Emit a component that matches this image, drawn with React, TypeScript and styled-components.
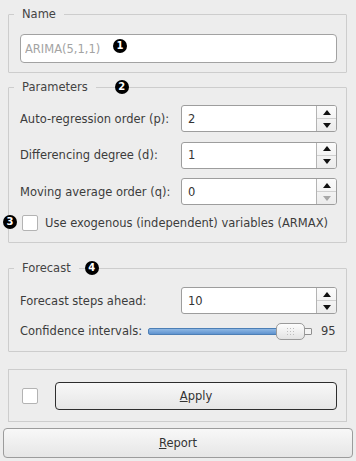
import React from "react";
import styled, { createGlobalStyle } from "styled-components";

const GlobalStyle = createGlobalStyle`
  html, body {
    margin: 0;
    padding: 0;
    background: #ededed;
  }
  body {
    font-family: "DejaVu Sans", "Liberation Sans", sans-serif;
    font-size: 11.5px;
    color: #3c3c3c;
  }
`;

const Page = styled.div`
  width: 356px;
  height: 461px;
  box-sizing: border-box;
  padding: 7px 9px 0 8px;
  display: flex;
  flex-direction: column;
`;

const Group = styled.fieldset<{ $gap?: number }>`
  margin: ${(p) => p.$gap ?? 0}px 0 0 0;
  padding: 0;
  border: 1px solid #cdcdcd;
  border-radius: 1px;
  min-width: 0;
`;

const Legend = styled.legend`
  position: relative;
  margin-left: 5px;
  padding: 0 8px;
  line-height: 14px;
  color: #444;
`;

const Badge = styled.span`
  display: inline-flex;
  align-items: center;
  justify-content: center;
  width: 14px;
  height: 14px;
  border-radius: 50%;
  background: #000;
  color: #fff;
  font-size: 10px;
  font-weight: bold;
  line-height: 1;
  position: absolute;
`;

const LegendBadge = styled(Badge)<{ $offset: number }>`
  top: 50%;
  left: calc(100% + ${(p) => p.$offset}px);
  transform: translateY(-50%);
`;

const Body = styled.div<{ $pad: string }>`
  padding: ${(p) => p.$pad};
`;

const InputWrap = styled.div`
  position: relative;
`;

const TextInput = styled.input`
  box-sizing: border-box;
  display: block;
  width: 100%;
  height: 29px;
  border: 1px solid #a2a2a2;
  border-radius: 4px;
  background: #fff;
  padding: 0 4px;
  font: inherit;
  color: #333;
  outline: none;
  &::placeholder {
    color: #a3a3a3;
  }
`;

const InputBadge = styled(Badge)`
  left: 93px;
  top: 5px;
`;

const FormGrid = styled.div`
  display: grid;
  grid-template-columns: 1fr 156px;
  grid-auto-rows: 27px;
  row-gap: 9.5px;
  align-items: center;
`;

const Label = styled.span`
  color: #3c3c3c;
  white-space: nowrap;
`;

const Spin = styled.div`
  box-sizing: border-box;
  height: 27px;
  display: flex;
  border: 1px solid #9d9d9d;
  border-radius: 3px;
  background: #fff;
  overflow: hidden;
`;

const SpinValue = styled.div`
  flex: 1;
  display: flex;
  align-items: center;
  padding-left: 6px;
  color: #333;
`;

const SpinButtons = styled.div`
  width: 19px;
  display: flex;
  flex-direction: column;
  border-left: 1px solid #b4b4b4;
  background: linear-gradient(#fbfbfb, #ececec);
`;

const SpinArrow = styled.div<{ $down?: boolean; $disabled?: boolean }>`
  flex: 1;
  display: flex;
  align-items: center;
  justify-content: center;
  & + & {
    border-top: 1px solid #d0d0d0;
  }
  &::after {
    content: "";
    width: 0;
    height: 0;
    border-left: 4.5px solid transparent;
    border-right: 4.5px solid transparent;
    ${(p) =>
      p.$down
        ? `border-top: 5px solid ${p.$disabled ? "#a8a8a8" : "#111"};`
        : `border-bottom: 5px solid ${p.$disabled ? "#a8a8a8" : "#111"};`}
  }
`;

const CheckRow = styled.div`
  position: relative;
  display: flex;
  align-items: center;
  gap: 7px;
  height: 17px;
  margin-top: 9px;
`;

const Check = styled.span<{ $inset?: number }>`
  box-sizing: border-box;
  width: 16px;
  height: 16px;
  margin-left: ${(p) => p.$inset ?? 0}px;
  border: 1px solid #b3b3b3;
  border-radius: 2px;
  background: #fff;
  flex-shrink: 0;
`;

const CheckBadge = styled(Badge)`
  left: -17px;
  top: 1px;
`;

const SliderRow = styled.div`
  display: flex;
  align-items: center;
  height: 20px;
  margin-top: 7px;
`;

const Slider = styled.div`
  flex: 1;
  display: flex;
  align-items: center;
  margin: 0 9px 0 6px;
`;

const Groove = styled.div<{ $filled?: boolean }>`
  box-sizing: border-box;
  height: 7px;
  border: 1px solid ${(p) => (p.$filled ? "#4d7fb5" : "#8f8f8f")};
  background: ${(p) =>
    p.$filled ? "linear-gradient(#8fb8e4, #5f93cf)" : "#f4f4f4"};
`;

const Fill = styled(Groove)`
  flex: 1;
  margin-right: -3px;
  border-radius: 2px 0 0 2px;
`;

const Tail = styled(Groove)`
  width: 9px;
  margin-left: -2px;
  border-radius: 0 1px 1px 0;
`;

const Handle = styled.div`
  box-sizing: border-box;
  position: relative;
  width: 29px;
  height: 17px;
  border: 1px solid #9a9a9a;
  border-radius: 5px;
  background: linear-gradient(#fdfdfd, #e3e3e3);
  display: flex;
  align-items: center;
  justify-content: center;
`;

const Grip = styled.div`
  width: 9px;
  height: 9px;
  background-image: radial-gradient(circle, #bdbdbd 0.8px, transparent 1px);
  background-size: 3px 3px;
`;

const SliderValue = styled.span`
  width: 16px;
  color: #3c3c3c;
`;

const ApplyBox = styled.div`
  margin-top: 17px;
  border: 1px solid #cdcdcd;
  padding: 12px 9px 11px 13px;
  display: flex;
  align-items: center;
  gap: 17px;
`;

const Button = styled.button<{ $focused?: boolean }>`
  box-sizing: border-box;
  height: 28px;
  border: 1px solid ${(p) => (p.$focused ? "#2e2e2e" : "#9c9c9c")};
  border-radius: 4px;
  background: linear-gradient(#f8f8f8, #e6e6e6);
  font: inherit;
  color: #333;
  padding: 0;
`;

const ApplyButton = styled(Button)`
  flex: 1;
`;

const ReportButton = styled(Button)`
  margin: 6px -6px 0 -5px;
  height: 30px;
`;

const Mnemonic = styled.span`
  text-decoration: underline;
`;

type SpinProps = { value: number; min?: number };

const SpinBox = ({ value, min = 0 }: SpinProps) => (
  <Spin>
    <SpinValue>{value}</SpinValue>
    <SpinButtons>
      <SpinArrow />
      <SpinArrow $down $disabled={value <= min} />
    </SpinButtons>
  </Spin>
);

const params = [
  { label: "Auto-regression order (p):", value: 2 },
  { label: "Differencing degree (d):", value: 1 },
  { label: "Moving average order (q):", value: 0 },
];

const App = () => {
  return (
    <>
      <GlobalStyle />
      <Page>
        <Group>
          <Legend>Name</Legend>
          <Body $pad="13px 9px 9px 11px">
            <InputWrap>
              <TextInput placeholder="ARIMA(5,1,1)" />
              <InputBadge>1</InputBadge>
            </InputWrap>
          </Body>
        </Group>

        <Group $gap={7}>
          <Legend>
            Parameters
            <LegendBadge $offset={19}>2</LegendBadge>
          </Legend>
          <Body $pad="11px 9px 11px 11px">
            <FormGrid>
              {params.map((p) => (
                <React.Fragment key={p.label}>
                  <Label>{p.label}</Label>
                  <SpinBox value={p.value} />
                </React.Fragment>
              ))}
            </FormGrid>
            <CheckRow>
              <Check $inset={2} />
              <Label>Use exogenous (independent) variables (ARMAX)</Label>
              <CheckBadge>3</CheckBadge>
            </CheckRow>
          </Body>
        </Group>

        <Group $gap={18}>
          <Legend>
            Forecast
            <LegendBadge $offset={6}>4</LegendBadge>
          </Legend>
          <Body $pad="12px 9px 10px 11px">
            <FormGrid>
              <Label>Forecast steps ahead:</Label>
              <SpinBox value={10} min={1} />
            </FormGrid>
            <SliderRow>
              <Label>Confidence intervals:</Label>
              <Slider>
                <Fill $filled />
                <Handle>
                  <Grip />
                </Handle>
                <Tail />
              </Slider>
              <SliderValue>95</SliderValue>
            </SliderRow>
          </Body>
        </Group>

        <ApplyBox>
          <Check />
          <ApplyButton $focused>
            <Mnemonic>A</Mnemonic>pply
          </ApplyButton>
        </ApplyBox>

        <ReportButton>
          <Mnemonic>R</Mnemonic>eport
        </ReportButton>
      </Page>
    </>
  );
};

export default App;
